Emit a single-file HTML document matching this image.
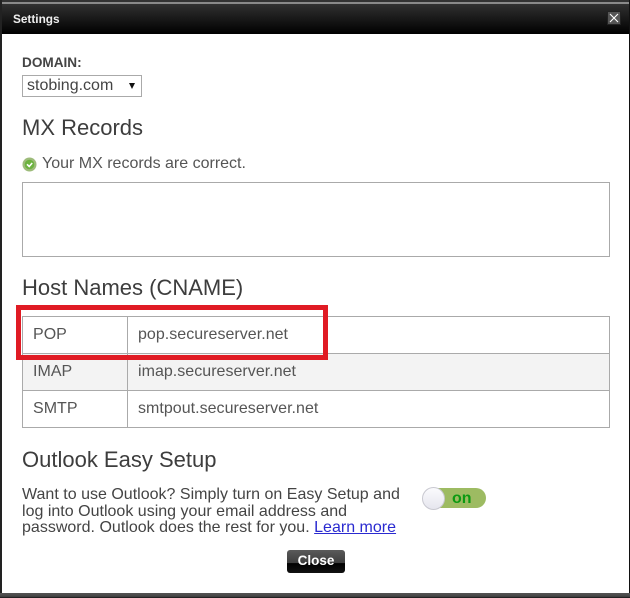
<!DOCTYPE html>
<html><head><meta charset="utf-8">
<style>
html,body{margin:0;padding:0;background:#fff}
body{width:630px;height:598px;position:relative;overflow:hidden;font-family:"Liberation Sans",sans-serif;color:#444}
div{position:absolute;box-sizing:border-box}
.t{white-space:nowrap;line-height:20px}
h2{position:absolute;margin:0;font-weight:normal;font-size:22px;line-height:26px;color:#3d3d3d;white-space:nowrap}
.cell{font-size:16px;color:#555;line-height:20px;white-space:nowrap;letter-spacing:.03px}
</style></head><body>
<div style="left:0;top:0;width:630px;height:34px;background:linear-gradient(#3a3a3a 0,#2c2c2c 20%,#000 100%)"></div>
<div style="left:0;top:0;width:630px;height:2px;background:#333"></div>
<div style="left:0;top:2px;width:630px;height:2px;background:#8a8a8a"></div>
<div style="left:0;top:0;width:2px;height:598px;background:#222"></div>
<div style="left:629px;top:0;width:1px;height:598px;background:#111"></div>
<div style="left:0;top:593px;width:630px;height:5px;background:linear-gradient(#555,#444 70%,#111)"></div>
<div class="t" style="left:13px;top:9px;font-size:11.8px;font-weight:bold;color:#eee">Settings</div>
<svg style="position:absolute;left:607px;top:11px" width="14" height="14"><rect x=".5" y=".5" width="13" height="13" fill="#555" stroke="#222"/><path d="M3 3L11 11M11 3L3 11" stroke="#fff" stroke-width="1.1"/></svg>

<div class="t" style="left:22px;top:53px;font-size:13.6px;font-weight:bold;color:#444">DOMAIN:</div>
<div style="left:22px;top:75px;width:120px;height:22px;border:1px solid #aaa;background:#fff"></div>
<div class="t" style="left:27px;top:76px;font-size:16px;color:#444">stobing.com</div>
<svg style="position:absolute;left:128px;top:82px" width="8" height="8"><path d="M1 1H7L4 7Z" fill="#111"/></svg>

<h2 style="left:22px;top:115px">MX Records</h2>
<svg style="position:absolute;left:22px;top:157px" width="15" height="15"><circle cx="7.5" cy="7.5" r="7" fill="#9dbb7a"/><circle cx="7.5" cy="7.5" r="4.8" fill="#6cb33f"/><path d="M5 7.3L7.2 9.5L10.2 6" stroke="#fff" stroke-width="1.6" fill="none"/></svg>
<div class="t" style="left:42px;top:154px;font-size:16px;color:#555">Your MX records are correct.</div>
<div style="left:22px;top:182px;width:588px;height:75px;border:1px solid #aaa;background:#fff"></div>

<h2 style="left:22px;top:275px">Host Names (CNAME)</h2>
<div style="left:22px;top:316px;width:588px;height:112px;border:1px solid #aaa;background:#fff"></div>
<div style="left:23px;top:354px;width:586px;height:36px;background:#f3f3f3"></div>
<div style="left:22px;top:353px;width:588px;height:1px;background:#aaa"></div>
<div style="left:22px;top:390px;width:588px;height:1px;background:#aaa"></div>
<div style="left:127px;top:316px;width:1px;height:112px;background:#aaa"></div>
<div class="cell" style="left:33px;top:325px">POP</div>
<div class="cell" style="left:138px;top:325px">pop.secureserver.net</div>
<div class="cell" style="left:33px;top:362px">IMAP</div>
<div class="cell" style="left:138px;top:362px">imap.secureserver.net</div>
<div class="cell" style="left:33px;top:399px">SMTP</div>
<div class="cell" style="left:138px;top:399px">smtpout.secureserver.net</div>
<div style="left:16px;top:305px;width:312px;height:55px;border:5px solid #e01b24"></div>

<h2 style="left:22px;top:447px">Outlook Easy Setup</h2>
<div class="t" style="left:22px;top:487px;font-size:16px;line-height:16.5px;color:#444;letter-spacing:.01px">Want to use Outlook? Simply turn on Easy Setup and<br>log into Outlook using your email address and<br>password. Outlook does the rest for you. <span style="color:#2a2ad0;text-decoration:underline">Learn more</span></div>

<div style="left:424px;top:488px;width:62px;height:20px;border-radius:10px;background:#9dbb62"></div>
<div class="t" style="left:452px;top:489px;font-size:16px;line-height:20px;font-weight:bold;color:#0c9a12">on</div>
<div style="left:422px;top:487px;width:23px;height:23px;border-radius:50%;background:linear-gradient(#fbfbfd,#e6e6ee);border:1px solid #c8c8d0"></div>

<div style="left:287px;top:550px;width:58px;height:23px;border-radius:3px;background:linear-gradient(#5a5a5a 0,#3e3e3e 56%,#000 58%,#111 100%)"></div>
<div class="t" style="left:287px;top:551px;width:58px;text-align:center;font-size:13.5px;font-weight:bold;color:#fff">Close</div>
</body></html>
